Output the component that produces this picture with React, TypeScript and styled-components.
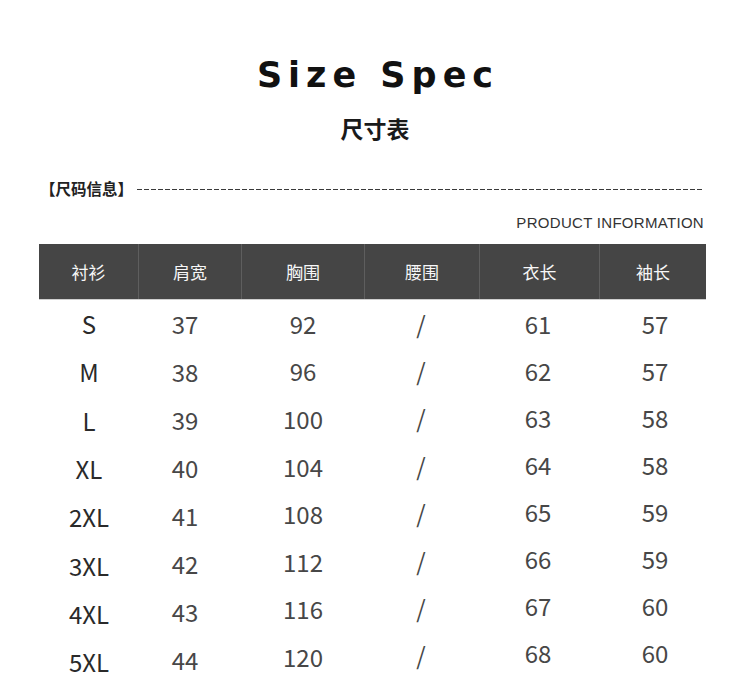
import * as React from 'react';
import styled, { createGlobalStyle } from 'styled-components';

const GlobalStyle = createGlobalStyle`
    html, body {
        margin: 0;
        padding: 0;
        background: #ffffff;
    }
`;

const CJK = `"Noto Sans CJK SC", "Noto Sans", sans-serif`;

const Page = styled.div`
    width: 750px;
    height: 688px;
    overflow: hidden;
    display: flex;
    flex-direction: column;
    background: #ffffff;
`;

const Title = styled.h1`
    margin: 55px 0 0;
    padding-left: 6px;
    height: 40px;
    font-family: "DejaVu Sans", sans-serif;
    font-weight: 700;
    font-size: 35px;
    line-height: 40px;
    letter-spacing: 6px;
    text-align: center;
    color: #111111;
`;

const Subtitle = styled.h2`
    margin: 18px 0 0;
    height: 30px;
    font-family: ${CJK};
    font-weight: 700;
    font-size: 23px;
    line-height: 30px;
    text-align: center;
    color: #1a1a1a;
`;

const InfoRow = styled.div`
    margin: 35px 46px 0 40px;
    height: 20px;
    display: flex;
    align-items: center;
    gap: 4px;
`;

const InfoLabel = styled.span`
    font-family: ${CJK};
    font-weight: 700;
    font-size: 15.5px;
    line-height: 20px;
    color: #222222;
    white-space: nowrap;
`;

const DashLine = styled.div`
    flex: 1;
    height: 1px;
    margin-top: 2px;
    background: repeating-linear-gradient(to right, #3a3a3a 0 5px, transparent 5px 7px);
`;

const ProductInfo = styled.div`
    margin: 15px 46px 0 0;
    height: 20px;
    font-family: "Liberation Sans", sans-serif;
    font-size: 15px;
    line-height: 20px;
    text-align: right;
    color: #333333;
    letter-spacing: 0.3px;
`;

const Table = styled.div`
    margin: 11px 0 0 39px;
    display: flex;
    flex-direction: column;
`;

const HeaderRow = styled.div`
    display: flex;
    height: 55px;
    background: #454545;
    border-bottom: 1px solid #cfcfcf;
    width: 667px;
`;

const HeaderCell = styled.div<{ w: number; last?: boolean }>`
    width: ${({ w }) => w}px;
    display: flex;
    align-items: center;
    justify-content: center;
    font-family: ${CJK};
    font-size: 17px;
    color: #f7f7f7;
    border-right: ${({ last }) => (last ? 'none' : '1px solid #5e5e5e')};
    box-sizing: border-box;
`;

const Body = styled.div`
    display: flex;
`;

const Column = styled.div<{ w: number }>`
    width: ${({ w }) => w}px;
    display: flex;
    flex-direction: column;
`;

const Cell = styled.div<{ pitch: number; dark?: boolean }>`
    height: ${({ pitch }) => pitch}px;
    display: flex;
    align-items: center;
    justify-content: center;
    font-family: ${CJK};
    font-size: 24px;
    line-height: 30px;
    color: ${({ dark }) => (dark ? '#2a2a2a' : '#474747')};
`;

const headers = [
    { label: '衬衫', w: 100 },
    { label: '肩宽', w: 103 },
    { label: '胸围', w: 123 },
    { label: '腰围', w: 115 },
    { label: '衣长', w: 120 },
    { label: '袖长', w: 106 },
];

const columns = [
    { w: 100, pitch: 48.3, dark: true, values: ['S', 'M', 'L', 'XL', '2XL', '3XL', '4XL', '5XL'] },
    { w: 92, pitch: 48, values: ['37', '38', '39', '40', '41', '42', '43', '44'] },
    { w: 144, pitch: 47.6, values: ['92', '96', '100', '104', '108', '112', '116', '120'] },
    { w: 92, pitch: 47.4, values: ['/', '/', '/', '/', '/', '/', '/', '/'] },
    { w: 142, pitch: 47.1, values: ['61', '62', '63', '64', '65', '66', '67', '68'] },
    { w: 92, pitch: 47.1, values: ['57', '57', '58', '58', '59', '59', '60', '60'] },
];

export default function App() {
    return (
        <Page>
            <GlobalStyle />
            <Title>Size Spec</Title>
            <Subtitle>尺寸表</Subtitle>
            <InfoRow>
                <InfoLabel>【尺码信息】</InfoLabel>
                <DashLine />
            </InfoRow>
            <ProductInfo>PRODUCT INFORMATION</ProductInfo>
            <Table>
                <HeaderRow>
                    {headers.map((h, i) => (
                        <HeaderCell key={h.label} w={h.w} last={i === headers.length - 1}>
                            {h.label}
                        </HeaderCell>
                    ))}
                </HeaderRow>
                <Body>
                    {columns.map((col, ci) => (
                        <Column key={ci} w={col.w}>
                            {col.values.map((v, ri) => (
                                <Cell key={ri} pitch={col.pitch} dark={col.dark}>
                                    {v}
                                </Cell>
                            ))}
                        </Column>
                    ))}
                </Body>
            </Table>
        </Page>
    );
}
